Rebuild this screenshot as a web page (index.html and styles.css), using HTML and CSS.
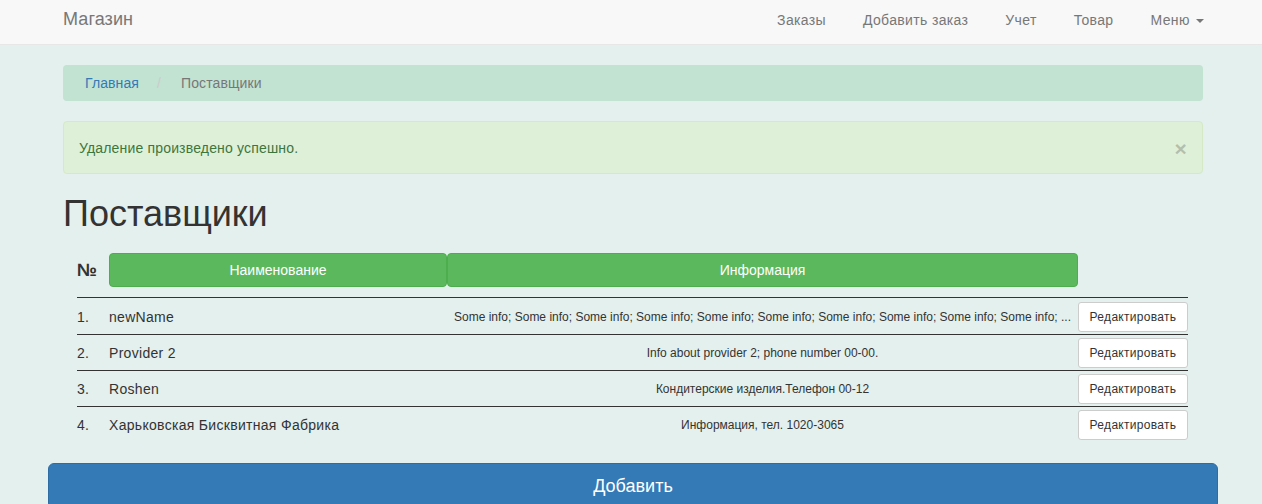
FILE: index.html
```html
<!DOCTYPE html>
<html lang="ru">
<head>
<meta charset="utf-8">
<title>Поставщики</title>
<link rel="stylesheet" href="styles.css">
</head>
<body>
<nav class="navbar">
  <div class="container navbar-inner">
    <a class="brand" href="#">Магазин</a>
    <ul class="nav">
      <li><a href="#">Заказы</a></li>
      <li><a href="#">Добавить заказ</a></li>
      <li><a href="#">Учет</a></li>
      <li><a href="#">Товар</a></li>
      <li><a href="#">Меню <span class="caret"></span></a></li>
    </ul>
  </div>
</nav>
<main class="container">
  <div class="inner">
    <ol class="breadcrumb">
      <li><a href="#">Главная</a></li>
      <li class="sep">/</li>
      <li class="active">Поставщики</li>
    </ol>
    <div class="alert">
      <span>Удаление произведено успешно.</span>
      <span class="close">×</span>
    </div>
    <h1>Поставщики</h1>
    <table class="table">
      <colgroup>
        <col class="c-num"><col class="c-name"><col class="c-info"><col class="c-act">
      </colgroup>
      <thead>
        <tr>
          <th class="num-h">№</th>
          <th><span class="btn-green">Наименование</span></th>
          <th><span class="btn-green">Информация</span></th>
          <th></th>
        </tr>
      </thead>
      <tbody>
        <tr>
          <td>1.</td>
          <td>newName</td>
          <td class="info">Some info; Some info; Some info; Some info; Some info; Some info; Some info; Some info; Some info; Some info; ...</td>
          <td><a class="btn-edit" href="#">Редактировать</a></td>
        </tr>
        <tr>
          <td>2.</td>
          <td>Provider 2</td>
          <td class="info">Info about provider 2; phone number 00-00.</td>
          <td><a class="btn-edit" href="#">Редактировать</a></td>
        </tr>
        <tr>
          <td>3.</td>
          <td>Roshen</td>
          <td class="info">Кондитерские изделия.Телефон 00-12</td>
          <td><a class="btn-edit" href="#">Редактировать</a></td>
        </tr>
        <tr>
          <td>4.</td>
          <td>Харьковская Бисквитная Фабрика</td>
          <td class="info">Информация, тел. 1020-3065</td>
          <td><a class="btn-edit" href="#">Редактировать</a></td>
        </tr>
      </tbody>
    </table>
  </div>
  <a class="btn-add" href="#">Добавить</a>
</main>
</body>
</html>
```

FILE: styles.css
```css
* { box-sizing: border-box; }

html, body {
  margin: 0;
  padding: 0;
}

body {
  background: #e3f0ed;
  font-family: "Liberation Sans", Arial, sans-serif;
  font-size: 14px;
  line-height: 20px;
  color: #333;
  overflow: hidden;
}

a { text-decoration: none; }

.container {
  width: 1170px;
  margin-left: max(0px, calc(50% - 583px));
}

/* Navbar */
.navbar {
  background: #f8f8f8;
  border-bottom: 1px solid #e7e7e7;
  height: 45px;
}

.navbar-inner {
  display: flex;
  justify-content: space-between;
  align-items: flex-start;
  height: 44px;
}

.brand {
  display: block;
  padding: 9px 15px 15px;
  font-size: 18px;
  line-height: 20px;
  color: #777;
  letter-spacing: 0.1px;
}

.nav {
  display: flex;
  gap: 7px;
  list-style: none;
  margin: 0 -1px 0 0;
  padding: 0;
}

.nav a {
  display: block;
  padding: 10px 15px 14px;
  color: #777;
  line-height: 20px;
  letter-spacing: 0.35px;
}

.caret {
  display: inline-block;
  width: 0;
  height: 0;
  margin-left: 2px;
  vertical-align: middle;
  border-top: 4px solid #777;
  border-left: 4px solid transparent;
  border-right: 4px solid transparent;
}

/* Content */
.inner {
  padding: 20px 15px 0;
}

.breadcrumb {
  display: flex;
  list-style: none;
  margin: 0 0 20px;
  padding: 8px 22px;
  background: #c2e2d2;
  border-radius: 4px;
  letter-spacing: 0.1px;
}

.breadcrumb a { color: #337ab7; }

.breadcrumb .sep {
  color: #ccc;
  padding: 0 20px 0 18px;
}

.breadcrumb .active { color: #777; }

.alert {
  display: flex;
  justify-content: space-between;
  align-items: center;
  padding: 15px 16px 15px 15px;
  background: #dff0d8;
  border: 1px solid #d6e9c6;
  border-radius: 4px;
  color: #3c763d;
  margin-bottom: 20px;
  letter-spacing: 0.17px;
}

.close {
  font-size: 21px;
  font-weight: bold;
  line-height: 1;
  color: #000;
  opacity: 0.2;
  position: relative;
  top: 1px;
  left: 1px;
}

h1 {
  margin: 19px 0 10px;
  font-size: 36px;
  font-weight: 500;
  line-height: 1.1;
  color: #333;
}

/* Table */
.table {
  width: 1111px;
  margin: 0 0 21px 14px;
  border-collapse: collapse;
  table-layout: fixed;
}

.c-num { width: 32px; }
.c-name { width: 338px; }
.c-info { width: 631px; }
.c-act { width: 110px; }

.table th {
  padding: 9px 0 10px;
  text-align: left;
  font-weight: bold;
}

.num-h {
  font-size: 18px;
  vertical-align: middle;
}

.btn-green {
  display: block;
  height: 34px;
  line-height: 32px;
  background: #5cb85c;
  border: 1px solid #4cae4c;
  border-radius: 4px;
  color: #fff;
  font-weight: normal;
  text-align: center;
  font-size: 14px;
}

.table td {
  border-top: 1px solid #333;
  padding: 3px 0 2px;
  vertical-align: middle;
  white-space: nowrap;
  letter-spacing: 0.3px;
}

.table tbody tr:first-child td {
  padding-top: 4px;
}

.table td.info {
  font-size: 12px;
  text-align: center;
  overflow: hidden;
  letter-spacing: 0;
}

.btn-edit {
  display: block;
  width: 110px;
  padding: 5px 4px;
  font-size: 12px;
  line-height: 18px;
  text-align: center;
  color: #333;
  background: #fff;
  border: 1px solid #ccc;
  border-radius: 3px;
  letter-spacing: 0.3px;
}

.btn-add {
  display: block;
  padding: 10px 16px;
  font-size: 18px;
  line-height: 24px;
  text-align: center;
  color: #fff;
  background: #337ab7;
  border: 1px solid #2e6da4;
  border-radius: 6px;
}
```
